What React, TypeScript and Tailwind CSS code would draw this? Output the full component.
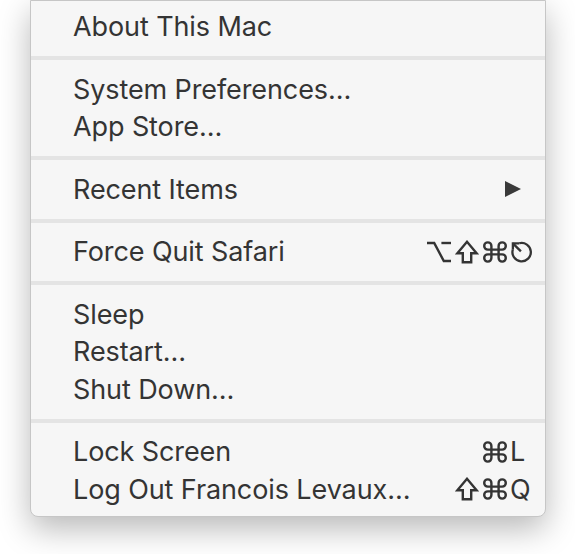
import type { ReactNode } from 'react'

type Item = {
  label: string
  mods?: Array<'opt' | 'shift' | 'cmd'>
  keyChar?: string
  submenu?: boolean
}

const GROUPS: Item[][] = [
  [{ label: 'About This Mac' }],
  [{ label: 'System Preferences…' }, { label: 'App Store…' }],
  [{ label: 'Recent Items', submenu: true }],
  [{ label: 'Force Quit Safari', mods: ['opt', 'shift', 'cmd'], keyChar: 'esc' }],
  [{ label: 'Sleep' }, { label: 'Restart…' }, { label: 'Shut Down…' }],
  [
    { label: 'Lock Screen', mods: ['cmd'], keyChar: 'L' },
    { label: 'Log Out Francois Levaux…', mods: ['shift', 'cmd'], keyChar: 'Q' },
  ],
]

// Keyboard symbols drawn as small icons (⌥ ⇧ ⌘ ⎋)
function KeyIcon({ children }: { children: ReactNode }) {
  return (
    <svg
      className="h-[24px] w-[24px]"
      viewBox="2 2 20 20"
      fill="none"
      stroke="#343434"
      strokeWidth={2}
      aria-hidden="true"
    >
      {children}
    </svg>
  )
}

const MOD_ICONS: Record<string, ReactNode> = {
  opt: (
    <KeyIcon>
      <path d="M2 4.5h6l8 15h6" />
      <path d="M14 4.5h8" />
    </KeyIcon>
  ),
  shift: (
    <KeyIcon>
      <path d="M8.5 20.5v-7.5H4L12 3.5l8 9.5h-4.5v7.5h-7z" />
    </KeyIcon>
  ),
  cmd: (
    <KeyIcon>
      <path d="M15 7v10a3 3 0 1 0 3-3H6a3 3 0 1 0 3 3V7a3 3 0 1 0-3 3h12a3 3 0 1 0-3-3" />
    </KeyIcon>
  ),
}

const ESC_ICON = (
  <KeyIcon>
    <path d="M10 4.4A8 8 0 1 1 4.4 10" />
    <path d="M4.5 4.5l7 7" />
    <path d="M4.5 10V4.5H10" />
  </KeyIcon>
)

function MenuRow({ item }: { item: Item }) {
  return (
    <div className="flex h-[37.5px] items-center pl-[42px] pr-[12px]">
      <span className="flex-1 text-[27px] leading-none tracking-[-0.1px] text-[#343434]">{item.label}</span>
      {item.submenu && (
        <svg className="mr-[11px] h-[18px] w-[18px]" viewBox="0 0 18 18" aria-hidden="true">
          <path d="M1 1 L17 9 L1 17 Z" fill="#3a3a3a" />
        </svg>
      )}
      {item.keyChar && (
        <div className="flex items-center text-[27px] leading-none text-[#343434]">
          <div className="flex items-center gap-[4px]">
            {item.mods?.map((m) => (
              <span key={m} className="flex">
                {MOD_ICONS[m]}
              </span>
            ))}
          </div>
          <span className="flex w-[26px] pl-[3px]">{item.keyChar === 'esc' ? ESC_ICON : item.keyChar}</span>
        </div>
      )}
    </div>
  )
}

export default function App() {
  return (
    <div className="min-h-[554px] bg-white pl-[30px]" style={{ fontFamily: 'Inter, "Noto Sans", sans-serif' }}>
      <div className="w-[516px] rounded-b-[8px] border border-[#c6c6c6] bg-[#f6f6f6] pt-[7px] pb-[8px] shadow-[0_12px_32px_rgba(0,0,0,0.28)]">
        {GROUPS.map((group, gi) => (
          <div key={gi}>
            {gi > 0 && (
              <div className="flex h-[25px] items-center">
                <div className="h-[4px] w-full bg-[#e4e4e4]" />
              </div>
            )}
            {group.map((item) => (
              <MenuRow key={item.label} item={item} />
            ))}
          </div>
        ))}
      </div>
    </div>
  )
}
